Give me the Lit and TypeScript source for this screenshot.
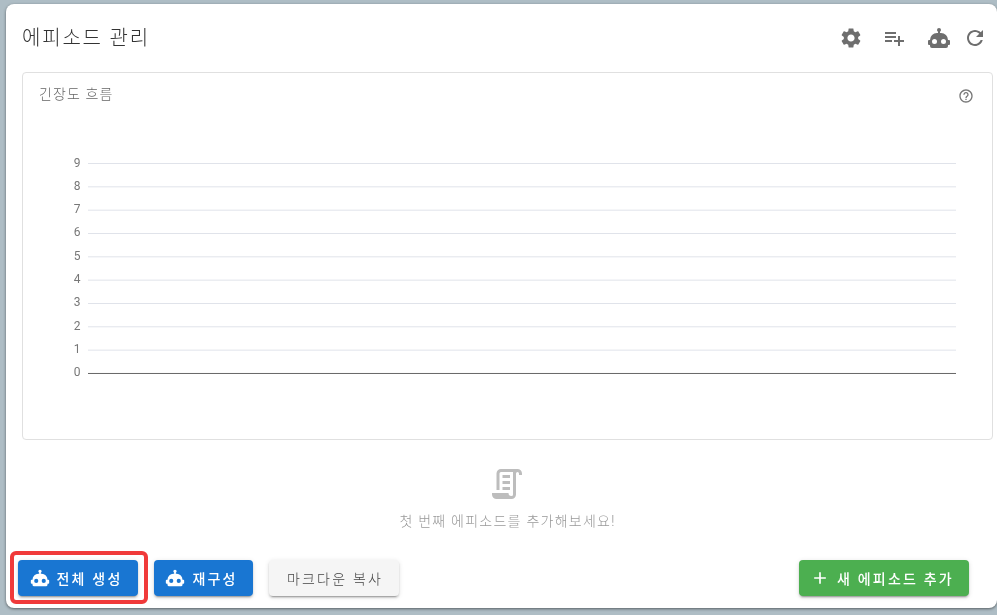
import { html, svg, LitElement, css } from 'lit';
import { customElement } from 'lit/decorators.js';

const ROBOT = 'M12,2A2,2 0 0,1 14,4C14,4.74 13.6,5.39 13,5.73V7H14A7,7 0 0,1 21,14H22A1,1 0 0,1 23,15V18A1,1 0 0,1 22,19H21V20A2,2 0 0,1 19,22H5A2,2 0 0,1 3,20V19H2A1,1 0 0,1 1,18V15A1,1 0 0,1 2,14H3A7,7 0 0,1 10,7H11V5.73C10.4,5.39 10,4.74 10,4A2,2 0 0,1 12,2M7.5,13A2.5,2.5 0 0,0 5,15.5A2.5,2.5 0 0,0 7.5,18A2.5,2.5 0 0,0 10,15.5A2.5,2.5 0 0,0 7.5,13M16.5,13A2.5,2.5 0 0,0 14,15.5A2.5,2.5 0 0,0 16.5,18A2.5,2.5 0 0,0 19,15.5A2.5,2.5 0 0,0 16.5,13Z';
const GEAR = 'M19.14 12.94c.04-.3.06-.61.06-.94 0-.32-.02-.64-.07-.94l2.03-1.58c.18-.14.23-.41.12-.61l-1.92-3.32c-.12-.22-.37-.29-.59-.22l-2.39.96c-.5-.38-1.03-.7-1.62-.94l-.36-2.54c-.04-.24-.24-.41-.48-.41h-3.84c-.24 0-.43.17-.47.41l-.36 2.54c-.59.24-1.13.57-1.62.94l-2.39-.96c-.22-.08-.47 0-.59.22L2.74 8.87c-.12.21-.08.47.12.61l2.03 1.58c-.05.3-.09.63-.09.94s.02.64.07.94l-2.03 1.58c-.18.14-.23.41-.12.61l1.92 3.32c.12.22.37.29.59.22l2.39-.96c.5.38 1.03.7 1.62.94l.36 2.54c.05.24.24.41.48.41h3.84c.24 0 .44-.17.47-.41l.36-2.54c.59-.24 1.13-.56 1.62-.94l2.39.96c.22.08.47 0 .59-.22l1.92-3.32c.12-.22.07-.47-.12-.61l-2.01-1.58zM12 15.6c-1.98 0-3.6-1.62-3.6-3.6s1.62-3.6 3.6-3.6 3.6 1.62 3.6 3.6-1.62 3.6-3.6 3.6z';
const PLAYLIST_ADD = 'M14 10H3v2h11v-2zm0-4H3v2h11V6zm4 8v-4h-2v4h-4v2h4v4h2v-4h4v-2h-4zM3 16h7v-2H3v2z';
const REFRESH = 'M17.65 6.35C16.2 4.9 14.21 4 12 4c-4.42 0-7.99 3.58-7.99 8s3.57 8 7.99 8c3.73 0 6.84-2.55 7.73-6h-2.08c-.82 2.33-3.04 4-5.65 4-3.31 0-6-2.69-6-6s2.69-6 6-6c1.66 0 3.14.69 4.22 1.78L13 11h7V4l-2.35 2.35z';
const HELP = 'M11 18h2v-2h-2v2zm1-16C6.48 2 2 6.48 2 12s4.48 10 10 10 10-4.48 10-10S17.52 2 12 2zm0 18c-4.41 0-8-3.59-8-8s3.59-8 8-8 8 3.59 8 8-3.59 8-8 8zm0-14c-2.21 0-4 1.79-4 4h2c0-1.1.9-2 2-2s2 .9 2 2c0 2-3 1.75-3 5h2c0-2.25 3-2.5 3-5 0-2.21-1.79-4-4-4z';
const ADD = 'M19 13h-6v6h-2v-6H5v-2h6V5h2v6h6v2z';
const SCROLL = 'M15,20A1,1 0 0,0 16,19V4H8A1,1 0 0,0 7,5V16H5V5A3,3 0 0,1 8,2H19A3,3 0 0,1 22,5V6H20V5A1,1 0 0,0 19,4A1,1 0 0,0 18,5V9L18,19A3,3 0 0,1 15,22H5A3,3 0 0,1 2,19V18H13A2,2 0 0,0 15,20M9,6H14V8H9V6M9,10H14V12H9V10M9,14H14V16H9V14Z';

const icon = (d: string, size = 24) => html`
  <svg width=${size} height=${size} viewBox="0 0 24 24" fill="currentColor" fill-rule="evenodd"><path d=${d}></path></svg>
`;

@customElement('app-root')
export default class AppRoot extends LitElement {
  static styles = [
    css`
      :host {
        display: block;
        width: 997px;
        height: 615px;
        overflow: hidden;
        box-sizing: border-box;
        padding: 4px 0 7px 6px;
        background: #aebdc5;
        font-family: Roboto, 'Noto Sans CJK KR', sans-serif;
      }
      svg { display: block; flex: none; }
      .dialog {
        height: 100%;
        background: #fff;
        border-radius: 8px;
        box-shadow: 0 1px 3px rgba(0, 0, 0, 0.5);
        display: flex;
        flex-direction: column;
        will-change: transform;
      }
      .header {
        display: flex;
        align-items: center;
        height: 68px;
        padding: 0 10px 0 16px;
        box-sizing: border-box;
      }
      .title {
        flex: 1;
        font-size: 20px;
        font-weight: 300;
        letter-spacing: 1.8px;
        color: #333;
        margin-top: -4px;
      }
      .tools {
        display: flex;
        color: #6e6e6e;
      }
      .tools .playlist { margin-left: 19px; }
      .tools .robot { margin-left: 21px; }
      .tools .refresh { margin-left: 12px; }
      .card {
        margin: 0 4px 0 16px;
        height: 368px;
        box-sizing: border-box;
        border: 1px solid #e0e0e0;
        border-radius: 4px;
        display: flex;
        flex-direction: column;
      }
      .card-head {
        display: flex;
        justify-content: space-between;
        padding: 11px 18px 0 16px;
        font-size: 14px;
        font-weight: 300;
        line-height: 20px;
        letter-spacing: 1.1px;
        color: #666;
      }
      .help { color: #777; margin-top: 4px; }
      .chart { margin-top: 49px; }
      .chart text {
        font-size: 12px;
        fill: #777;
        font-family: Roboto, sans-serif;
        text-anchor: end;
      }
      .empty {
        flex: 1;
        display: flex;
        flex-direction: column;
        align-items: center;
        padding: 26px 0 0 12px;
        color: #bdbdbd;
      }
      .empty svg { margin-right: 2px; }
      .empty p {
        margin: 8px 0 0;
        font-size: 14px;
        font-weight: 300;
        line-height: 22px;
        color: #999;
        letter-spacing: 1.25px;
      }
      .actions {
        display: flex;
        padding: 0 28px 12px 12px;
      }
      .btn {
        position: relative;
        height: 36px;
        box-sizing: border-box;
        border: 0;
        border-radius: 4px;
        display: flex;
        align-items: center;
        justify-content: center;
        gap: 7px;
        padding: 0 4px 0 0;
        font: 500 14px Roboto, 'Noto Sans CJK KR', sans-serif;
        letter-spacing: 2.2px;
        box-shadow: 0 3px 1px -2px rgba(0, 0, 0, 0.2), 0 2px 2px 0 rgba(0, 0, 0, 0.14), 0 1px 5px 0 rgba(0, 0, 0, 0.12);
      }
      .primary { background: #1976d2; color: #fff; }
      .plain { background: #f5f5f5; color: #444; font-weight: 300; padding: 0 0 0 2px; }
      .success { background: #4caf50; color: #fff; margin-left: auto; }
      .all { width: 120px; }
      .rebuild { width: 99px; margin-left: 16px; }
      .copy { width: 130px; margin-left: 16px; }
      .add { width: 170px; }
      .highlight {
        position: absolute;
        inset: -9px -10px -8px -8px;
        border: 4px solid #f03a3a;
        border-radius: 6px;
        pointer-events: none;
      }
    `
  ];

  private chart() {
    const ticks = [9, 8, 7, 6, 5, 4, 3, 2, 1, 0];
    return html`
      <svg class="chart" width="969" height="230" viewBox="0 0 969 230">
        ${ticks.map((t, i) => {
          const y = 10.5 + i * 23.33;
          return svg`
            <line x1="65" x2="933" y1=${y} y2=${y} stroke=${t === 0 ? '#666' : '#e0e3ea'} stroke-width="1"></line>
            <text x="57.5" y=${y + 3}>${t}</text>
          `;
        })}
      </svg>
    `;
  }

  render() {
    return html`
      <div class="dialog">
        <div class="header">
          <div class="title">에피소드 관리</div>
          <div class="tools">
            ${icon(GEAR)}
            <span class="playlist">${icon(PLAYLIST_ADD)}</span>
            <span class="robot">${icon(ROBOT)}</span>
            <span class="refresh">${icon(REFRESH)}</span>
          </div>
        </div>
        <div class="card">
          <div class="card-head">
            <span>긴장도 흐름</span>
            <span class="help">${icon(HELP, 16)}</span>
          </div>
          ${this.chart()}
        </div>
        <div class="empty">
          ${icon(SCROLL, 36)}
          <p>첫 번째 에피소드를 추가해보세요!</p>
        </div>
        <div class="actions">
          <button class="btn primary all">
            ${icon(ROBOT, 20)}전체 생성
            <span class="highlight"></span>
          </button>
          <button class="btn primary rebuild">${icon(ROBOT, 20)}재구성</button>
          <button class="btn plain copy">마크다운 복사</button>
          <button class="btn success add">${icon(ADD, 20)}새 에피소드 추가</button>
        </div>
      </div>
    `;
  }
}
